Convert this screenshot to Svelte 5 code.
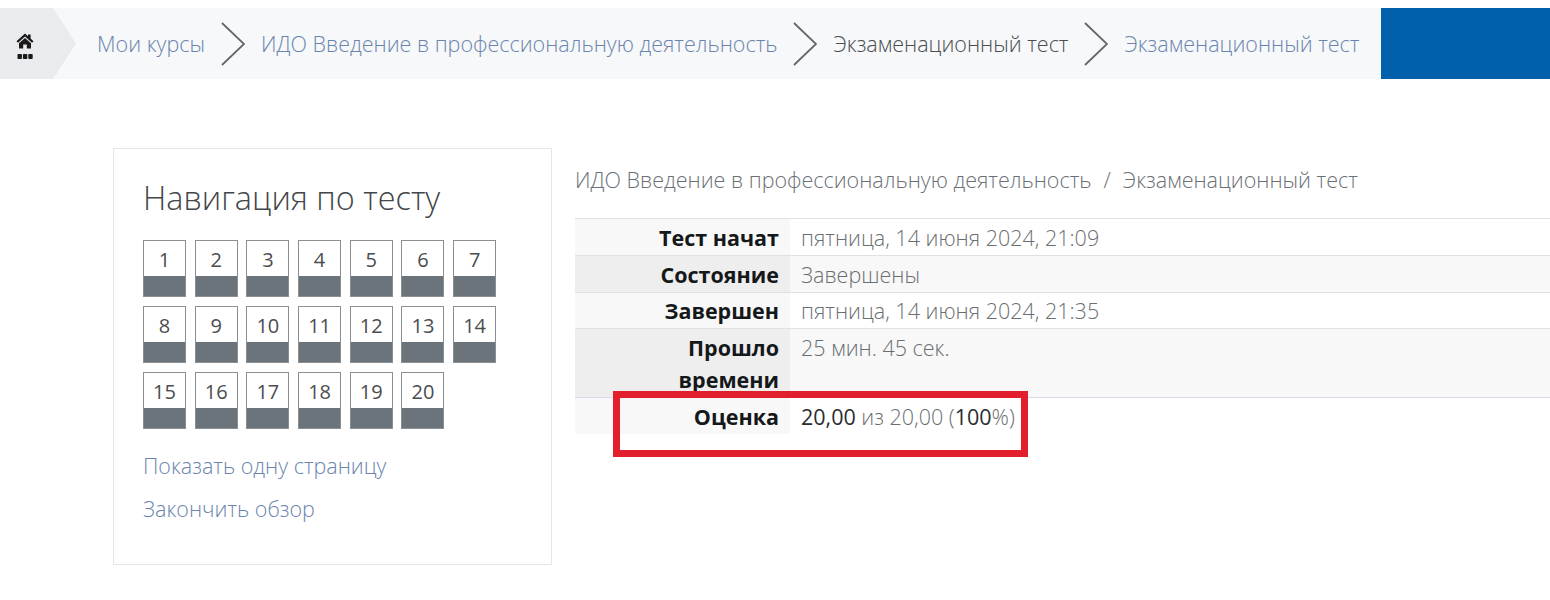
<script>
  const rows = [[1,2,3,4,5,6,7],[8,9,10,11,12,13,14],[15,16,17,18,19,20]];
</script>

<div class="page">
  <nav class="bar">
    <div class="home">
      <svg width="20" height="28" viewBox="0 0 20 28">
        <path d="M10 0.5 L1.5 8.2 L3 9.8 L10 3.6 L17 9.8 L18.5 8.2 L15.6 5.6 V1.5 H13 V3.3 Z" fill="#1a1a1a"/>
        <path d="M4 10.2 L10 5 L16 10.2 V15.5 H11.8 V11.5 H8.2 V15.5 H4 Z" fill="#1a1a1a"/>
        <rect x="2.5" y="21" width="4.4" height="5" rx="0.8" fill="#1a1a1a"/>
        <rect x="7.9" y="21" width="4.4" height="5" rx="0.8" fill="#1a1a1a"/>
        <rect x="13.3" y="21" width="4.4" height="5" rx="0.8" fill="#1a1a1a"/>
      </svg>
    </div>
    <div class="crumbs">
      <span class="link">Мои курсы</span>
      <svg class="chev" width="24" height="44" viewBox="0 0 24 44"><path d="M1 1 L23 22 L1 43" /></svg>
      <span class="link">ИДО Введение в профессиональную деятельность</span>
      <svg class="chev" width="24" height="44" viewBox="0 0 24 44"><path d="M1 1 L23 22 L1 43" /></svg>
      <span class="plain">Экзаменационный тест</span>
      <svg class="chev" width="24" height="44" viewBox="0 0 24 44"><path d="M1 1 L23 22 L1 43" /></svg>
      <span class="link">Экзаменационный тест</span>
    </div>
    <div class="blue"></div>
  </nav>

  <main class="content">
    <aside class="panel">
      <h2>Навигация по тесту</h2>
      <div class="grid">
        {#each rows as row}
          <div class="row">
            {#each row as n}
              <div class="q"><span class="num">{n}</span><span class="fill"></span></div>
            {/each}
          </div>
        {/each}
      </div>
      <p class="action first">Показать одну страницу</p>
      <p class="action">Закончить обзор</p>
    </aside>

    <section class="summary">
      <div class="path"><span>ИДО Введение в профессиональную деятельность</span><span class="sep">/</span><span>Экзаменационный тест</span></div>
      <div class="table-wrap">
        <table>
          <tbody>
            <tr><th>Тест начат</th><td>пятница, 14 июня 2024, 21:09</td></tr>
            <tr class="odd"><th>Состояние</th><td>Завершены</td></tr>
            <tr class="short"><th>Завершен</th><td>пятница, 14 июня 2024, 21:35</td></tr>
            <tr class="odd tall"><th>Прошло<br />времени</th><td>25 мин. 45 сек.</td></tr>
            <tr class="last"><th>Оценка</th><td><b>20,00</b> из 20,00 (<b>100</b>%)</td></tr>
          </tbody>
        </table>
        <div class="mark"></div>
      </div>
    </section>
  </main>
</div>

<style>
  :global(body) {
    margin: 0;
    background: #fff;
  }
  .page {
    width: 1550px;
    height: 600px;
    overflow: hidden;
    padding-top: 8px;
    box-sizing: border-box;
    font-family: "Open Sans", "Noto Sans", sans-serif;
    font-weight: 300;
    color: #373a3c;
  }
  .bar {
    display: flex;
    height: 71px;
    background: #f6f8fa;
  }
  .home {
    width: 76px;
    flex: none;
    box-sizing: border-box;
    padding: 25px 0 0 15px;
    background: #e9ecee;
    clip-path: polygon(0 0, 53px 0, 100% 50%, 53px 100%, 0 100%);
  }
  .home svg {
    display: block;
  }
  .crumbs {
    display: flex;
    align-items: center;
    flex: 1;
    padding-left: 21px;
    font-size: 21.5px;
    white-space: nowrap;
  }
  .link {
    color: #6b84ad;
  }
  .plain {
    color: #4a4d50;
  }
  .chev {
    flex: none;
    margin: 0 16px;
    fill: none;
    stroke: #666;
    stroke-width: 1.8;
  }
  .blue {
    width: 169px;
    flex: none;
    background: #0060ac;
  }
  .content {
    display: flex;
    align-items: flex-start;
    padding: 69px 0 0 113px;
  }
  .panel {
    width: 439px;
    height: 417px;
    flex: none;
    box-sizing: border-box;
    padding: 26px 29px;
    border: 1px solid #e4e6e8;
  }
  h2 {
    margin: 0 0 21px;
    font-size: 32.4px;
    font-weight: 300;
    line-height: 44px;
    color: #43464a;
  }
  .grid {
    display: flex;
    flex-direction: column;
    gap: 9px;
  }
  .row {
    display: flex;
    gap: 8.7px;
  }
  .q {
    display: flex;
    flex-direction: column;
    width: 43px;
    height: 57px;
    box-sizing: border-box;
    border: 1px solid #8a8f93;
  }
  .num {
    height: 35px;
    text-align: center;
    font-size: 20px;
    font-weight: 400;
    line-height: 38px;
    color: #4a4d50;
  }
  .fill {
    flex: 1;
    background: #6b747b;
  }
  .action {
    margin: 0;
    font-size: 21.5px;
    line-height: 29px;
    color: #6b84ad;
  }
  .action.first {
    margin: 22px 0 14px;
  }
  .summary {
    flex: 1;
    margin-left: 23px;
    padding-top: 17px;
  }
  .path {
    display: flex;
    height: 53px;
    font-size: 21.5px;
    line-height: 30px;
    color: #6a7076;
  }
  .sep {
    margin: 0 12px;
  }
  .table-wrap {
    position: relative;
  }
  table {
    width: 100%;
    border-collapse: collapse;
    font-size: 21.5px;
    line-height: 32px;
  }
  tr {
    height: 37px;
    border-top: 1px solid #dfe2e5;
  }
  tr.short {
    height: 36px;
  }
  tr.short th,
  tr.short td {
    padding-top: 2px;
    padding-bottom: 0;
  }
  tr.tall {
    height: 69px;
  }
  tr.last {
    height: 36px;
    border-top: 1px solid #d9dce8;
  }
  th {
    width: 215px;
    box-sizing: border-box;
    padding: 3px 11px 1px 0;
    text-align: right;
    vertical-align: top;
    font-weight: 700;
    color: #15181a;
    background: #f8f8f8;
  }
  tr.odd th {
    background: #eeeeee;
  }
  td {
    padding: 3px 11px 1px;
    vertical-align: top;
    color: #6a6e71;
    background: #fff;
  }
  tr.odd td {
    background: #f8f8f8;
  }
  b {
    font-weight: 500;
    color: #2a2d2f;
  }
  .mark {
    position: absolute;
    left: 38px;
    top: 173px;
    width: 415px;
    height: 66px;
    box-sizing: border-box;
    border: 7px solid #e21f2d;
  }
</style>
